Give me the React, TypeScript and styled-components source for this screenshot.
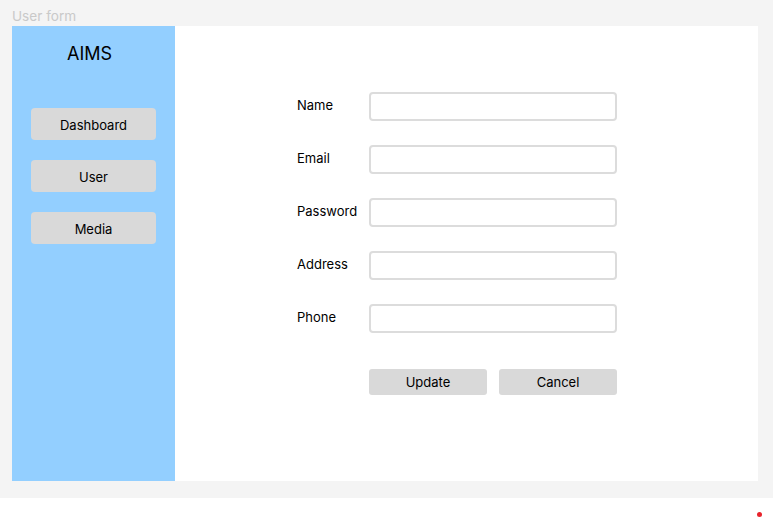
import React from "react";
import styled, { createGlobalStyle } from "styled-components";

const Global = createGlobalStyle`
  html, body { margin: 0; padding: 0; background: #ffffff; }
  body { font-family: Inter, "Noto Sans", Arial, sans-serif; }
  * { box-sizing: border-box; }
`;

const Page = styled.div`
  width: 773px;
  height: 518px;
  position: relative;
  background: #ffffff;
`;

const Frame = styled.div`
  height: 498px;
  background: #f4f4f4;
  display: flex;
  flex-direction: column;
  padding: 0 15px 17px 12px;
`;

const FrameTitle = styled.div`
  height: 26px;
  font-size: 13.6px;
  line-height: 16px;
  padding-top: 8px;
  color: #c9c9c9;
`;

const Card = styled.div`
  flex: 1;
  display: flex;
  background: #ffffff;
`;

const Sidebar = styled.nav`
  width: 163px;
  background: #93cfff;
  display: flex;
  flex-direction: column;
  align-items: center;
  padding-top: 17px;
`;

const Brand = styled.div`
  font-size: 18px;
  line-height: 22px;
  color: #000;
  margin-right: 8px;
  margin-bottom: 43px;
`;

const NavList = styled.div`
  display: flex;
  flex-direction: column;
  gap: 20px;
`;

const NavButton = styled.button`
  width: 125px;
  height: 32px;
  border: none;
  border-radius: 4px;
  background: #d9d9d9;
  font-family: inherit;
  font-size: 13px;
  color: #000;
  padding: 2px 0 0;
  cursor: pointer;
`;

const Main = styled.main`
  flex: 1;
  padding: 66px 0 0 122px;
`;

const Form = styled.form`
  display: grid;
  grid-template-columns: 72px 248px;
  row-gap: 24px;
  align-items: center;
`;

const Label = styled.label`
  font-size: 13px;
  color: #000;
  line-height: 16px;
  margin-top: -4px;
`;

const Input = styled.input`
  width: 248px;
  height: 29px;
  border: 2px solid #dcdcdc;
  border-radius: 4px;
  background: #fff;
  outline: none;
`;

const Actions = styled.div`
  grid-column: 2;
  display: flex;
  gap: 12px;
  margin-top: 12px;
`;

const ActionButton = styled.button`
  width: 118px;
  height: 26px;
  border: none;
  border-radius: 3px;
  background: #d9d9d9;
  font-family: inherit;
  font-size: 13px;
  color: #000;
  padding: 0;
  cursor: pointer;
`;

const Dot = styled.span`
  position: absolute;
  left: 757px;
  top: 512px;
  width: 5px;
  height: 5px;
  border-radius: 50%;
  background: #e8232c;
`;

const fields = ["Name", "Email", "Password", "Address", "Phone"];

export default function App() {
  return (
    <Page>
      <Global />
      <Frame>
        <FrameTitle>User form</FrameTitle>
        <Card>
          <Sidebar>
            <Brand>AIMS</Brand>
            <NavList>
              <NavButton>Dashboard</NavButton>
              <NavButton>User</NavButton>
              <NavButton>Media</NavButton>
            </NavList>
          </Sidebar>
          <Main>
            <Form onSubmit={(e) => e.preventDefault()}>
              {fields.map((f) => (
                <React.Fragment key={f}>
                  <Label>{f}</Label>
                  <Input type={f === "Password" ? "password" : "text"} />
                </React.Fragment>
              ))}
              <Actions>
                <ActionButton type="button">Update</ActionButton>
                <ActionButton type="button">Cancel</ActionButton>
              </Actions>
            </Form>
          </Main>
        </Card>
      </Frame>
      <Dot />
    </Page>
  );
}
